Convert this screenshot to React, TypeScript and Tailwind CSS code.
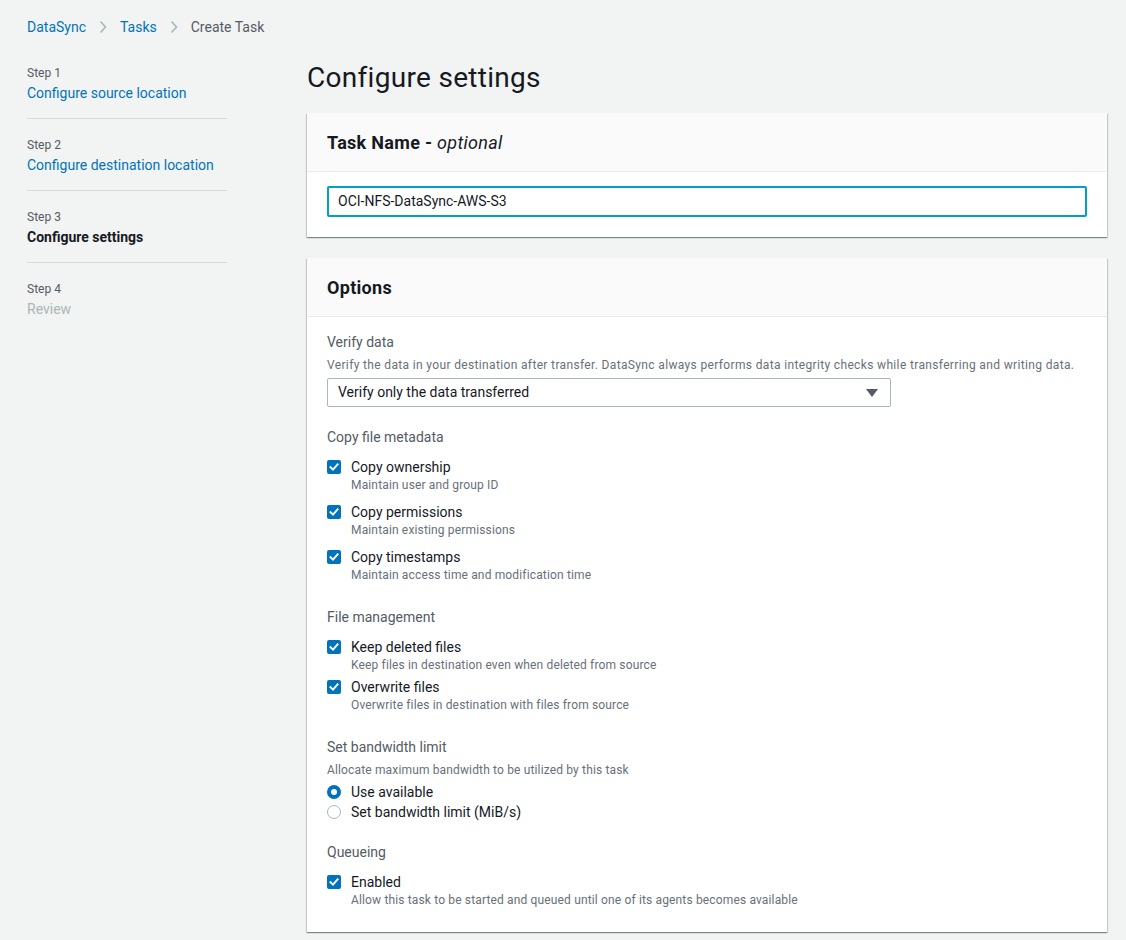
import React from 'react';

const font = { fontFamily: 'Roboto, "Noto Sans", Arial, sans-serif' };

const Check = () => (
  <span className="mt-[3px] flex h-[14px] w-[14px] shrink-0 items-center justify-center rounded-[2px] bg-[#0073bb]">
    <svg width="10" height="10" viewBox="0 0 10 10" fill="none">
      <path d="M1.5 5.2 L4 7.6 L8.6 2.4" stroke="white" strokeWidth="1.9" strokeLinecap="square" />
    </svg>
  </span>
);

const CheckRow = ({ label, desc, className = '' }: { label: string; desc: string; className?: string }) => (
  <div className={`flex gap-[10px] ${className}`}>
    <Check />
    <div>
      <div className="text-[14px] leading-[20px] text-[#16191f]">{label}</div>
      <div className="text-[12px] leading-[16px] tracking-[0.15px] text-[#687078]">{desc}</div>
    </div>
  </div>
);

const Radio = ({ on, label }: { on?: boolean; label: string }) => (
  <div className="flex h-[20px] items-center gap-[10px]">
    {on ? (
      <span className="h-[14px] w-[14px] rounded-full border-[4px] border-[#0073bb] bg-white" />
    ) : (
      <span className="h-[14px] w-[14px] rounded-full border border-[#aab7b8] bg-white" />
    )}
    <span className="text-[14px] leading-[20px] text-[#16191f]">{label}</span>
  </div>
);

const Card = ({ title, children, className = '' }: { title: React.ReactNode; children: React.ReactNode; className?: string }) => (
  <div className={`bg-white shadow-[0_1px_1px_0_rgba(0,28,36,0.3),1px_1px_1px_0_rgba(0,28,36,0.15),-1px_1px_1px_0_rgba(0,28,36,0.15)] ${className}`}>
    <div className="h-[59px] border-b border-[#eaeded] bg-[#fafafa] px-5 pt-[19px] text-[18px] font-bold leading-[22px] tracking-[0.3px] text-[#16191f]">
      {title}
    </div>
    {children}
  </div>
);

const steps = [
  { n: 1, title: 'Configure source location', state: 'link' },
  { n: 2, title: 'Configure destination location', state: 'link' },
  { n: 3, title: 'Configure settings', state: 'active' },
  { n: 4, title: 'Review', state: 'disabled' },
];

export default function App() {
  return (
    <div className="min-h-screen bg-[#f2f3f3] pl-[27px] pt-[17px]" style={font}>
      {/* Breadcrumb */}
      <div className="flex h-[20px] items-center text-[14px] leading-[20px]">
        <span className="text-[#0073bb]">DataSync</span>
        <svg className="mx-[12px]" width="10" height="14" viewBox="0 0 10 14" fill="none">
          <path d="M2.5 1.5 L7.5 7 L2.5 12.5" stroke="#aab7b8" strokeWidth="1.6" />
        </svg>
        <span className="text-[#0073bb]">Tasks</span>
        <svg className="mx-[12px]" width="10" height="14" viewBox="0 0 10 14" fill="none">
          <path d="M2.5 1.5 L7.5 7 L2.5 12.5" stroke="#aab7b8" strokeWidth="1.6" />
        </svg>
        <span className="text-[#545b64]">Create Task</span>
      </div>

      <div className="flex gap-[80px]">
        {/* Steps */}
        <nav className="w-[200px] shrink-0 pt-[28px]">
          {steps.map((s, i) => (
            <div key={s.n} className={i < steps.length - 1 ? 'border-b border-[#d5dbdb] pb-[15px] mb-[18px]' : ''}>
              <div className="text-[12px] leading-[16px] text-[#545b64]">Step {s.n}</div>
              <div
                className={`mt-[2px] text-[14px] leading-[20px] ${
                  s.state === 'link' ? 'text-[#0073bb]' : s.state === 'active' ? 'font-bold text-[#16191f]' : 'text-[#aab7b8]'
                }`}
              >
                {s.title}
              </div>
            </div>
          ))}
        </nav>

        {/* Main */}
        <main className="w-[800px] pt-[23px]">
          <h1 className="text-[28px] font-normal leading-[36px] tracking-[0.3px] text-[#16191f]">Configure settings</h1>

          <Card
            className="mt-[17px]"
            title={
              <>
                Task Name - <span className="font-normal italic">optional</span>
              </>
            }
          >
            <div className="px-5 pb-[20px] pt-[14px]">
              <div className="flex h-[31px] items-center rounded-[2px] border-2 border-[#00a1c9] px-[9px] text-[14px] text-[#16191f]">
                OCI-NFS-DataSync-AWS-S3
              </div>
            </div>
          </Card>

          <Card className="mt-[21px]" title="Options">
            <div className="px-5 pb-[24px] pt-[14px]">
              <div className="text-[14px] leading-[22px] text-[#545b64]">Verify data</div>
              <div className="mt-[4px] text-[12px] leading-[16px] tracking-[0.35px] text-[#687078]">
                Verify the data in your destination after transfer. DataSync always performs data integrity checks while transferring and writing data.
              </div>
              <div className="mt-[5px] flex h-[29px] w-[564px] items-center justify-between rounded-[2px] border border-[#aab7b8] pl-[10px] pr-[12px] text-[14px] text-[#16191f]">
                <span>Verify only the data transferred</span>
                <svg width="12" height="8" viewBox="0 0 12 8">
                  <path d="M0 0 H12 L6 8 Z" fill="#545b64" />
                </svg>
              </div>

              <div className="mt-[19px] text-[14px] leading-[22px] text-[#545b64]">Copy file metadata</div>
              <CheckRow className="mt-[9px]" label="Copy ownership" desc="Maintain user and group ID" />
              <CheckRow className="mt-[9px]" label="Copy permissions" desc="Maintain existing permissions" />
              <CheckRow className="mt-[9px]" label="Copy timestamps" desc="Maintain access time and modification time" />

              <div className="mt-[23px] text-[14px] leading-[22px] text-[#545b64]">File management</div>
              <CheckRow className="mt-[9px]" label="Keep deleted files" desc="Keep files in destination even when deleted from source" />
              <CheckRow className="mt-[4px]" label="Overwrite files" desc="Overwrite files in destination with files from source" />

              <div className="mt-[23px] text-[14px] leading-[22px] text-[#545b64]">Set bandwidth limit</div>
              <div className="mt-[4px] text-[12px] leading-[16px] tracking-[0.15px] text-[#687078]">
                Allocate maximum bandwidth to be utilized by this task
              </div>
              <div className="mt-[4px]">
                <Radio on label="Use available" />
                <Radio label="Set bandwidth limit (MiB/s)" />
              </div>

              <div className="mt-[19px] text-[14px] leading-[22px] text-[#545b64]">Queueing</div>
              <CheckRow
                className="mt-[9px]"
                label="Enabled"
                desc="Allow this task to be started and queued until one of its agents becomes available"
              />
            </div>
          </Card>
        </main>
      </div>
    </div>
  );
}
